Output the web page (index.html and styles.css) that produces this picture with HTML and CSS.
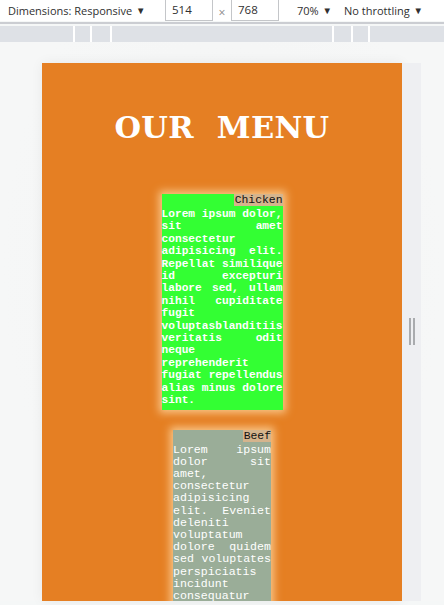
FILE: index.html
```html
<!DOCTYPE html>
<html>
<head>
<meta charset="utf-8">
<link rel="stylesheet" href="styles.css">
</head>
<body>
<div class="toolbar">
  <span class="dims">Dimensions: Responsive <span class="arrow">▼</span></span>
  <span class="field">514</span>
  <span class="times">×</span>
  <span class="field">768</span>
  <span class="zoom">70% <span class="arrow">▼</span></span>
  <span class="throttle">No throttling <span class="arrow">▼</span></span>
</div>
<div class="sep"></div>
<div class="ruler">
  <span class="seg s1"></span><span class="seg s2"></span><span class="seg s3"></span><span class="seg s4"></span><span class="seg s5"></span><span class="seg s6"></span><span class="seg s7"></span>
</div>
<div class="viewport">
  <div class="device">
    <div class="page">
      <h1 class="title">OUR MENU</h1>
      <div class="card chicken">
        <div class="label-row"><span class="label">Chicken</span></div>
        <p class="desc">Lorem ipsum dolor, sit amet consectetur adipisicing elit. Repellat similique id excepturi labore sed, ullam nihil cupiditate fugit voluptasblanditiis veritatis odit neque reprehenderit fugiat repellendus alias minus dolore sint.</p>
      </div>
      <div class="card beef">
        <div class="label-row"><span class="label">Beef</span></div>
        <p class="desc">Lorem ipsum dolor sit amet, consectetur adipisicing elit. Eveniet deleniti voluptatum dolore quidem sed voluptates perspiciatis incidunt consequatur laboriosam nobis.</p>
      </div>
    </div>
    <div class="handle-strip"><span class="grip"></span></div>
  </div>
</div>
</body>
</html>
```
FILE: styles.css
```css
html, body {
  margin: 0;
  padding: 0;
  width: 444px;
  height: 605px;
  overflow: hidden;
  background: #f5f7f7;
  font-family: "Open Sans", "Noto Sans", sans-serif;
}
.toolbar {
  height: 21px;
  background: #ffffff;
  display: flex;
  align-items: center;
  font-size: 11px;
  color: #303030;
  white-space: nowrap;
}
.arrow {
  font-size: 9.5px;
  position: relative;
  top: -1px;
  margin-left: 1px;
}
.dims {
  margin-left: 8px;
  width: 157px;
}
.field {
  box-sizing: border-box;
  height: 22px;
  margin-top: -2px;
  width: 48px;
  border: 1px solid #c4c6c9;
  border-top: none;
  padding: 3px 0 0 6px;
  background: #fff;
  font-size: 11.5px;
}
.times {
  width: 18px;
  text-align: center;
  color: #888;
  font-size: 12px;
  padding-top: 3px;
}
.zoom {
  margin-left: 18px;
  width: 47px;
}
.sep {
  height: 2px;
  margin-top: 1px;
  background: #cbcdd2;
}
.ruler {
  margin-top: 2px;
  height: 16px;
  display: flex;
  gap: 2px;
  background: #ffffff;
}
.seg { background: #dee1e6; height: 100%; }
.s1 { width: 73px; }
.s2 { width: 15px; }
.s3 { width: 18px; }
.s4 { width: 220px; }
.s5 { width: 17px; }
.s6 { width: 15px; }
.s7 { flex: 1; }
.viewport {
  padding: 21px 0 0 42px;
  background: radial-gradient(ellipse at 50% 40%, #f3f4f4 0%, #f6f7f7 70%);
}
.device {
  display: flex;
  height: 538px;
}
.page {
  width: 360px;
  background: #e57f23;
  display: flex;
  flex-direction: column;
  align-items: center;
  box-shadow: 0 0 12px rgba(0,0,0,0.06);
  overflow: hidden;
}
.title {
  margin: 44px 0 0 0;
  font-family: "DejaVu Serif", "Liberation Serif", serif;
  font-weight: bold;
  font-size: 30.5px;
  line-height: 40px;
  color: #ffffff;
  letter-spacing: 0.3px;
  word-spacing: 12px;
}
.card {
  box-shadow: 0 0 8px 3px rgba(255, 222, 170, 0.75);
  font-family: "Liberation Mono", "Courier New", monospace;
  color: #ffffff;
}
.chicken {
  margin-top: 47px;
  width: 121px;
  background: #33ff33;
  font-size: 11.2px;
  font-weight: bold;
  padding-bottom: 3px;
}
.beef {
  margin-top: 20px;
  width: 98px;
  background: #9aad98;
  font-size: 11.6px;
}
.label-row {
  display: flex;
  justify-content: flex-end;
}
.label {
  background: #d5b48d;
  color: #111;
  font-weight: normal;
  font-size: 11.4px;
  line-height: 12px;
  padding-left: 1px;
}
.desc {
  margin: 2px 0 0 0;
  line-height: 12.4px;
  text-align: justify;
}
.beef .desc {
  line-height: 12.2px;
}
.handle-strip {
  width: 19px;
  background: #eeeff2;
  display: flex;
  align-items: center;
  justify-content: center;
}
.grip {
  width: 2px;
  height: 27px;
  border-left: 2px solid #a9abae;
  border-right: 2px solid #a9abae;
  margin-top: -1px;
}
```
